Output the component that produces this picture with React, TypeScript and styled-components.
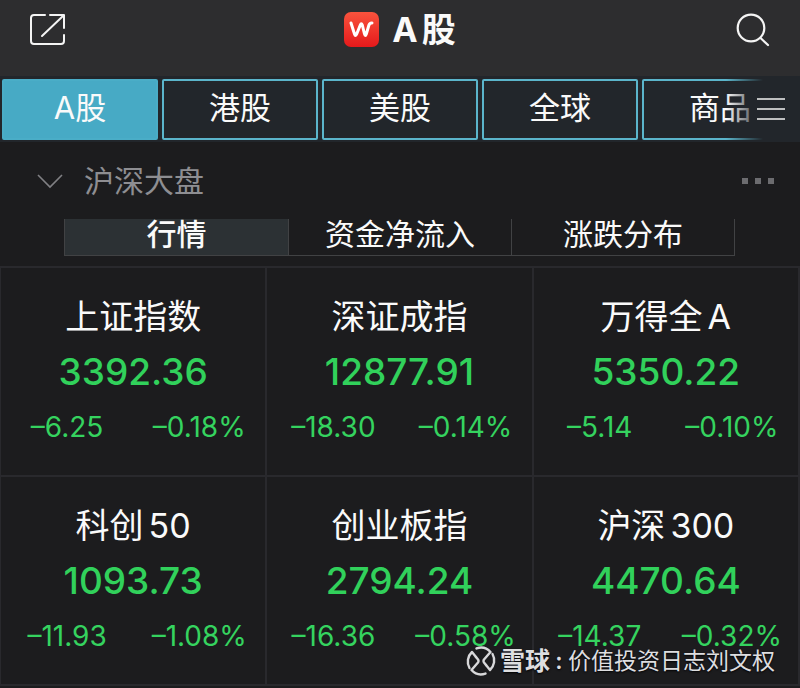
import React from "react";
import styled, { createGlobalStyle, css } from "styled-components";

const GlobalStyle = createGlobalStyle`
  * { box-sizing: border-box; }
  body {
    margin: 0;
    background: #1c1c1e;
    color: #fafafa;
    font-family: Inter, "Noto Sans CJK SC", sans-serif;
  }
  button {
    margin: 0;
    padding: 0;
    border: 0;
    background: none;
    color: inherit;
    font: inherit;
    cursor: pointer;
  }
`;

const Page = styled.div`
  position: relative;
  overflow: hidden;
`;

const Header = styled.header`
  display: grid;
  grid-template-columns: 1fr auto 1fr;
  align-items: center;
  height: 76px;
  padding: 0 29px 18px;
  background: #2d2d2f;
`;

const IconButton = styled.button<{ $end?: boolean }>`
  display: flex;
  justify-self: ${(p) => (p.$end ? "end" : "start")};
`;

const Brand = styled.div`
  display: flex;
  align-items: center;
  gap: 13px;
`;

const Title = styled.h1`
  display: flex;
  gap: 4px;
  margin: 0;
  padding-top: 2px;
  font-size: 34px;
  line-height: 44px;
  font-weight: 700;
`;

const Strip = styled.nav`
  position: relative;
  display: grid;
  grid-template-columns: repeat(5, 1fr);
  gap: 4px;
  padding: 3px 2px 2px;
  background: #22262b;
`;

const MarketTab = styled.button<{ $active?: boolean }>`
  height: 61px;
  padding-bottom: 4px;
  border: 2px solid #5bb5cb;
  border-radius: 2px;
  background: #22262b;
  font-size: 31px;
  line-height: 44px;
  ${(p) =>
    p.$active &&
    css`
      border-color: #4aadc7;
      background: #47aac5;
    `}
`;

const StripMenu = styled.div`
  position: absolute;
  inset: 0 0 0 auto;
  display: flex;
  align-items: center;
  justify-content: flex-end;
  width: 74px;
  padding-right: 15px;
  background: linear-gradient(to right, #22262b00, #22262b 50%);
`;

const PanelHead = styled.div`
  display: flex;
  align-items: center;
  gap: 21px;
  height: 77px;
  padding: 0 25px 0 37px;
`;

const PanelTitle = styled.h2`
  flex: 1;
  margin: 0;
  color: #8e8e92;
  font-size: 30px;
  line-height: 44px;
  font-weight: 400;
`;

const Views = styled.div`
  display: grid;
  grid-template-columns: repeat(3, 1fr);
  margin: 0 65px 10px 64px;
  border: 1px solid #414244;
  border-top: 0;
`;

const ViewTab = styled.button<{ $active?: boolean }>`
  height: 36px;
  padding-bottom: 5px;
  font-size: 30px;
  line-height: 31px;
  white-space: nowrap;
  font-weight: ${(p) => (p.$active ? 500 : 400)};
  background: ${(p) => (p.$active ? "#2c3134" : "transparent")};
  & + & {
    border-left: 1px solid #414244;
  }
`;

const Board = styled.main`
  display: grid;
  grid-template-columns: repeat(3, 1fr);
  border: solid #29292d;
  border-width: 2px 0 0 1px;
`;

const Cell = styled.section`
  display: flex;
  flex-direction: column;
  align-items: center;
  height: 209px;
  padding-top: 24px;
  border: solid #29292d;
  border-width: 0 2px 2px 0;
`;

const Name = styled.h3`
  display: flex;
  gap: 5px;
  margin: 0;
  font-size: 34px;
  line-height: 50px;
  font-weight: 400;
`;

const Price = styled.div`
  color: #31d15b;
  font-size: 37px;
  line-height: 60px;
  font-weight: 500;
`;

const Changes = styled.div`
  display: grid;
  grid-template-columns: 1fr 1fr;
  width: 100%;
  margin-top: 10px;
  color: #35d35f;
  font-size: 28px;
  line-height: 30px;
  text-align: center;
`;

const Watermark = styled.div`
  position: absolute;
  right: 25px;
  bottom: 10px;
  display: flex;
  align-items: center;
  color: #dedee0;
  font-size: 23px;
  line-height: 24px;
  text-shadow: 0 1px 2px #000;
`;

const WatermarkBrand = styled.strong`
  margin-left: 4px;
  font-size: 25px;
  font-weight: 700;
`;

const WatermarkColon = styled.span`
  width: 18px;
  font-weight: 600;
  text-align: center;
`;

const markets = ["A股", "港股", "美股", "全球", "商品"];
const views = ["行情", "资金净流入", "涨跌分布"];
const indices = [
  { name: ["上证指数"], price: "3392.36", change: "–6.25", percent: "–0.18%" },
  { name: ["深证成指"], price: "12877.91", change: "–18.30", percent: "–0.14%" },
  { name: ["万得全", "A"], price: "5350.22", change: "–5.14", percent: "–0.10%" },
  { name: ["科创", "50"], price: "1093.73", change: "–11.93", percent: "–1.08%" },
  { name: ["创业板指"], price: "2794.24", change: "–16.36", percent: "–0.58%" },
  { name: ["沪深", "300"], price: "4470.64", change: "–14.37", percent: "–0.32%" },
];

const ShareIcon = () => (
  <svg width="38" height="36" viewBox="0 0 38 36" fill="none" stroke="#f4f4f4" strokeWidth="2" strokeLinecap="round" strokeLinejoin="round">
    <path d="M16 4H5Q2 4 2 7V30Q2 33 5 33H32Q35 33 35 30V24" />
    <path d="M21 4H35V17M34 5L13 25" />
  </svg>
);

const SearchIcon = () => (
  <svg width="36" height="36" viewBox="0 0 36 36" fill="none" stroke="#f4f4f4" strokeWidth="2.2" strokeLinecap="round">
    <circle cx="16" cy="17" r="13.3" />
    <path d="M25.5 27L33 34" />
  </svg>
);

const Logo = () => (
  <svg width="35" height="35" viewBox="0 0 35 35" aria-hidden="true">
    <defs>
      <linearGradient id="logoFill" x1="0" y1="0" x2="0" y2="1">
        <stop offset="0" stopColor="#f9533d" />
        <stop offset="1" stopColor="#e5191b" />
      </linearGradient>
    </defs>
    <rect width="35" height="35" rx="7" fill="url(#logoFill)" />
    <path d="M7 11L10.5 22Q11.5 25 12.7 22L16.3 13Q17.3 10.5 18.3 13L20.5 22Q21.3 25 22.3 22L24.8 13.5Q25.6 10.8 28 11" fill="none" stroke="#fff" strokeWidth="3" strokeLinecap="round" strokeLinejoin="round" />
  </svg>
);

const MenuIcon = () => (
  <svg width="28" height="24" viewBox="0 0 28 24" stroke="#f2f2f2" strokeWidth="1.6">
    <path d="M0 2H28M0 12H28M0 22H28" />
  </svg>
);

const ChevronIcon = () => (
  <svg width="26" height="16" viewBox="0 0 26 16" fill="none" stroke="#808084" strokeWidth="1.6">
    <path d="M1 2L13 14L25 2" />
  </svg>
);

const MoreIcon = () => (
  <svg width="34" height="8" viewBox="0 0 34 8" fill="#6c6c6f">
    <path d="M1 1H7V7H1ZM14 1H20V7H14ZM27 1H33V7H27Z" />
  </svg>
);

const SnowballIcon = () => (
  <svg width="30" height="30" viewBox="0 0 30 30" fill="none" stroke="#d8d8da" strokeWidth="2.4" strokeLinecap="round" strokeLinejoin="round" aria-hidden="true">
    <path d="M10.5 2.4A13 13 0 0 1 24.5 6L18 13.5Q17 15 18 16.5L20 19" />
    <path d="M19.5 27.6A13 13 0 0 1 5.5 24L12 16.5Q13 15 12 13.5L10 11" />
    <path d="M10 11L6 6A13 13 0 0 0 3.5 22" />
    <path d="M20 19L24 24A13 13 0 0 0 26.5 8" />
  </svg>
);

export default function App() {
  return (
    <Page>
      <GlobalStyle />
      <Header>
        <IconButton aria-label="分享"><ShareIcon /></IconButton>
        <Brand>
          <Logo />
          <Title><span>A</span><span>股</span></Title>
        </Brand>
        <IconButton $end aria-label="搜索"><SearchIcon /></IconButton>
      </Header>
      <Strip>
        {markets.map((m, i) => (
          <MarketTab key={m} $active={i === 0}>{m}</MarketTab>
        ))}
        <StripMenu>
          <IconButton aria-label="菜单"><MenuIcon /></IconButton>
        </StripMenu>
      </Strip>
      <PanelHead>
        <IconButton aria-label="收起"><ChevronIcon /></IconButton>
        <PanelTitle>沪深大盘</PanelTitle>
        <IconButton aria-label="更多"><MoreIcon /></IconButton>
      </PanelHead>
      <Views>
        {views.map((v, i) => (
          <ViewTab key={v} $active={i === 0}>{v}</ViewTab>
        ))}
      </Views>
      <Board>
        {indices.map((x) => (
          <Cell key={x.price}>
            <Name>{x.name.map((part) => <span key={part}>{part}</span>)}</Name>
            <Price>{x.price}</Price>
            <Changes>
              <span>{x.change}</span>
              <span>{x.percent}</span>
            </Changes>
          </Cell>
        ))}
      </Board>
      <Watermark>
        <SnowballIcon />
        <WatermarkBrand>雪球</WatermarkBrand>
        <WatermarkColon>:</WatermarkColon>
        <span>价值投资日志刘文权</span>
      </Watermark>
    </Page>
  );
}
